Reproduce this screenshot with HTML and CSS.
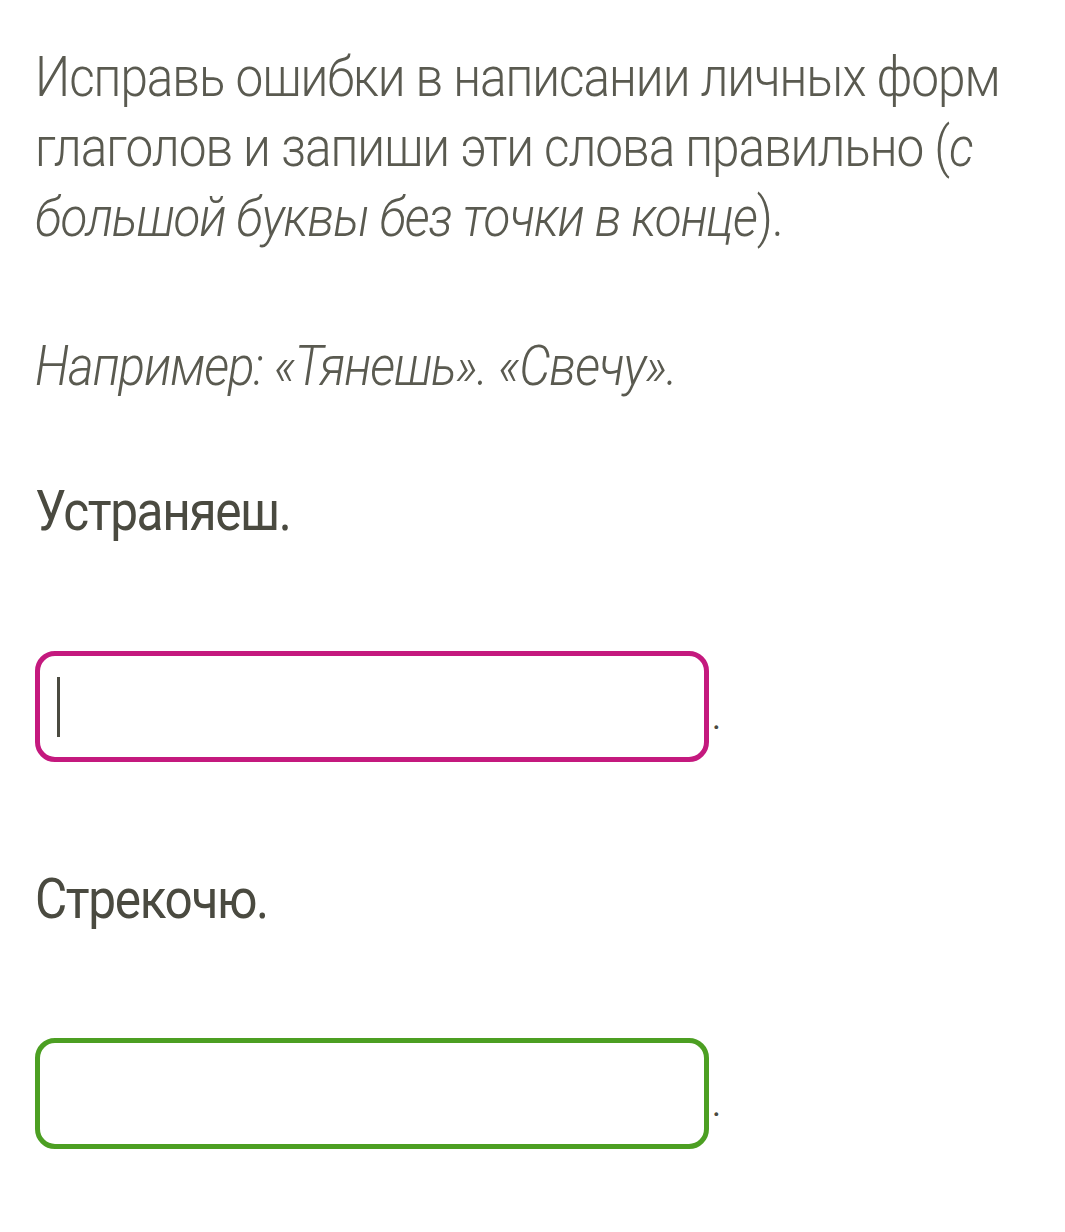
FILE: index.html
```html
<!DOCTYPE html>
<html lang="ru">
<head>
<meta charset="utf-8">
<title>Задание</title>
<link rel="stylesheet" href="styles.css">
</head>
<body>
<main class="page">
  <p class="text task">Исправь ошибки в написании личных форм<br>глаголов и запиши эти слова правильно (<em>с<br>большой буквы без точки в конце</em>).</p>
  <p class="text example"><em>Например: «Тянешь». «Свечу».</em></p>

  <p class="text question q1">Устраняеш.</p>
  <div class="answer a1">
    <div class="field field-active"><span class="caret"></span></div>
    <span class="dot">.</span>
  </div>

  <p class="text question q2">Стрекочю.</p>
  <div class="answer a2">
    <div class="field field-ok"></div>
    <span class="dot">.</span>
  </div>
</main>
</body>
</html>
```

FILE: styles.css
```css
html, body {
  margin: 0;
  padding: 0;
  background: #ffffff;
}

.page {
  padding: 42px 0 0 35px;
  font-family: "Roboto Light", Roboto, "Noto Sans", sans-serif;
  color: #4a4a40;
}

.text {
  margin: 0;
  font-size: 55px;
  line-height: 70px;
  white-space: nowrap;
  letter-spacing: -1.5px;
  transform: scaleX(0.9);
  transform-origin: left top;
}

.task,
.example {
  font-weight: 300;
  letter-spacing: -1.15px;
  color: #5a5a50;
}

.text em {
  font-style: italic;
}

.example {
  margin-top: 79px;
}

.question {
  font-family: Roboto, "Noto Sans", sans-serif;
  font-weight: 400;
  color: #4a4a40;
}

.q1 {
  margin-top: 75px;
}

.q2 {
  margin-top: 102px;
}

.answer {
  display: flex;
  align-items: flex-end;
}

.a1 {
  margin-top: 105px;
}

.a2 {
  margin-top: 104px;
}

.field {
  box-sizing: border-box;
  width: 674px;
  height: 111px;
  border: 5px solid #c4197e;
  border-radius: 20px;
  display: flex;
  align-items: center;
  padding-left: 17px;
}

.field-ok {
  border-color: #4c9f22;
}

.caret {
  display: block;
  width: 3px;
  height: 60px;
  background: #4a4a40;
}

.dot {
  font-family: Roboto, sans-serif;
  font-size: 34px;
  line-height: 30px;
  margin: 0 0 30px 3px;
  color: #4a4a40;
}
```
